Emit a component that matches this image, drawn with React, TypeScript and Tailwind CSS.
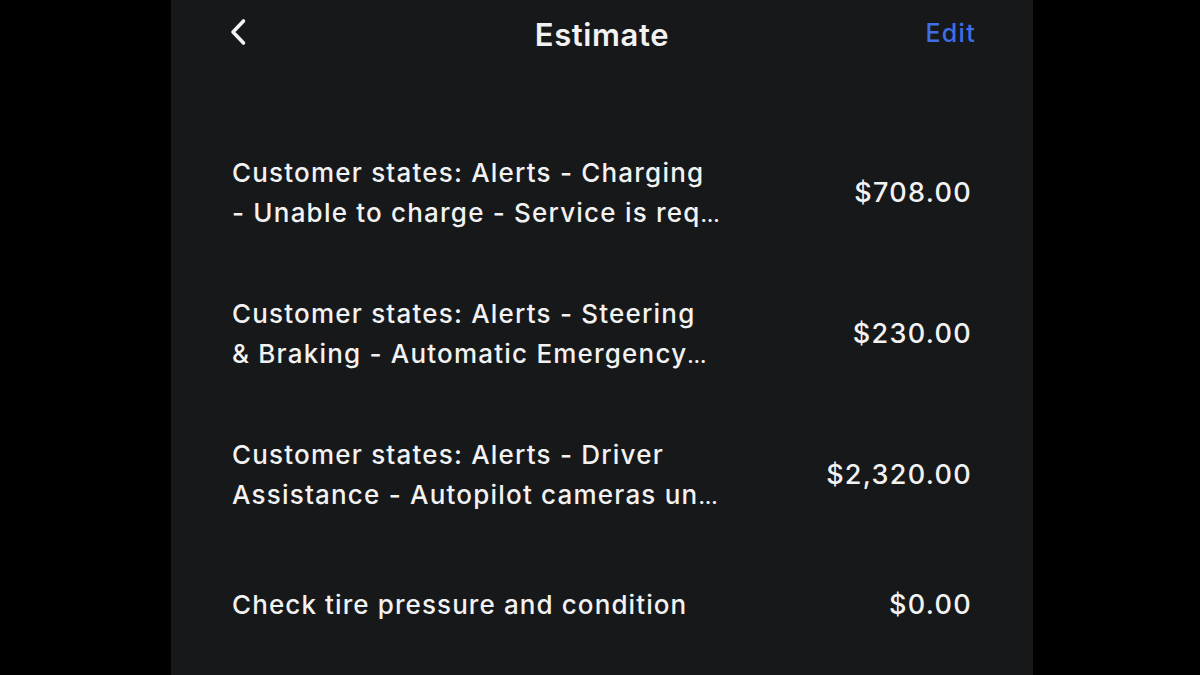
import React from "react";

const items = [
  { l1: "Customer states: Alerts - Charging", l2: "- Unable to charge - Service is req", price: "$708.00" },
  { l1: "Customer states: Alerts - Steering", l2: "& Braking - Automatic Emergency", price: "$230.00" },
  { l1: "Customer states: Alerts - Driver", l2: "Assistance - Autopilot cameras un", price: "$2,320.00" },
];

export default function App() {
  return (
    <div className="w-[1200px] h-[675px] bg-black flex pl-[171px] overflow-hidden" style={{ fontFamily: "Inter, 'Noto Sans', sans-serif" }}>
      <div className="w-[862px] h-full bg-[#17181a] flex flex-col text-[#f2f2f2]">
        <div className="h-[72px] grid grid-cols-[1fr_auto_1fr] items-center pl-[57px] pr-[57px] pb-[2px]">
          <svg width="20" height="30" viewBox="0 0 20 30" className="mt-[-6px]">
            <path d="M15.5 4 L5 15 L15.5 26" stroke="#f2f2f2" strokeWidth="3.6" fill="none" strokeLinecap="round" strokeLinejoin="round" />
          </svg>
          <div className="text-[31px] font-semibold tracking-[0.6px]">Estimate</div>
          <div className="justify-self-end text-[25px] font-medium tracking-[1.3px] text-[#3f6ee6] mt-[-2px]">Edit</div>
        </div>
        <div className="flex flex-col pl-[61px] pr-[61px] mt-[81px]">
          {items.map((it) => (
            <div key={it.price} className="h-[141px] flex items-start justify-between">
              <div className="text-[26px] font-medium leading-[40px] tracking-[1.2px]">
                <div>{it.l1}</div>
                <div>
                  {it.l2}
                  <span className="text-[20px] font-semibold tracking-[0px]">…</span>
                </div>
              </div>
              <div className="text-[27px] font-medium leading-[40px] tracking-[1.3px] mt-[20px]">{it.price}</div>
            </div>
          ))}
          <div className="flex items-start justify-between mt-[9px]">
            <div className="text-[26px] font-medium leading-[40px] tracking-[1.1px]">Check tire pressure and condition</div>
            <div className="text-[27px] font-medium leading-[40px] tracking-[1.3px]">$0.00</div>
          </div>
        </div>
      </div>
    </div>
  );
}
